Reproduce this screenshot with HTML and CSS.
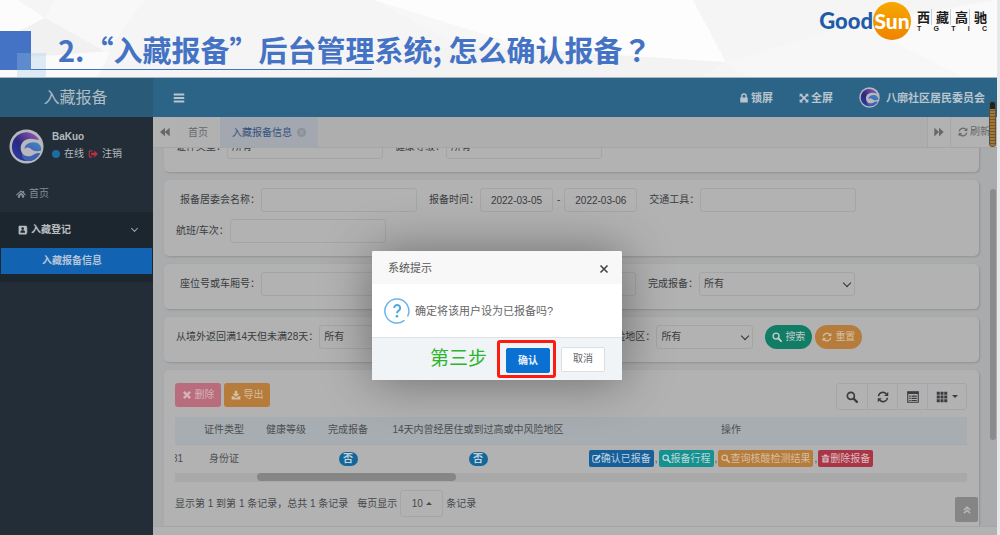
FILE: index.html
```html
<!DOCTYPE html>
<html lang="zh-CN">
<head>
<meta charset="utf-8">
<title>入藏报备后台管理系统</title>
<link rel="stylesheet" href="styles.css">
</head>
<body>
<svg class="sprite" aria-hidden="true">
  <defs>
    <linearGradient id="ring" x1="0" y1="1" x2="1" y2="0"><stop offset="0" stop-color="#2b3fa8"/><stop offset=".45" stop-color="#2a2a80"/><stop offset="1" stop-color="#a05cb8"/></linearGradient>
    <linearGradient id="wave" x1="0" y1="1" x2="1" y2="0"><stop offset="0" stop-color="#5a4fc0"/><stop offset="1" stop-color="#2f93b8"/></linearGradient>
  </defs>
  <symbol id="bars" viewBox="0 0 16 16"><path d="M1 2h14v2.6H1zM1 6.7h14v2.6H1zM1 11.4h14V14H1z"/></symbol>
  <symbol id="lock" viewBox="0 0 16 16"><path fill-rule="evenodd" d="M2 7h1.500V5a4.500 4.500 0 0 1 9 0v2H14v8H2zM5.700 7h4.600V5a2.300 2.300 0 0 0-4.600 0z"/></symbol>
  <symbol id="expand" viewBox="0 0 16 16"><path d="M1 1h5.500L4.800 2.800 8 6l3.200-3.200L9.500 1H15v5.500l-1.800-1.700L10 8l3.200 3.200L15 9.500V15H9.500l1.700-1.800L8 10l-3.200 3.200L6.500 15H1V9.500l1.800 1.700L6 8 2.800 4.800 1 6.500z"/></symbol>
  <symbol id="back" viewBox="0 0 16 16"><path d="M8 1v14L0 8zM15.500 1v14L7.500 8z"/></symbol>
  <symbol id="forward" viewBox="0 0 16 16"><path d="M.500 1l7.500 7-7.500 7zM8 1l7.500 7L8 15z"/></symbol>
  <symbol id="refresh" viewBox="0 0 16 16"><path d="M2 7a6 6 0 0 1 10.500-3M14 9a6 6 0 0 1-10.500 3" fill="none" stroke="currentColor" stroke-width="2"/><path d="M15 1v5.500H9.500zM1 15V9.500h5.500z"/></symbol>
  <symbol id="home" viewBox="0 0 16 16"><path d="M8 2l2.800 2.400V3H13v3.300L16 9l-1 1.200-7-6-7 6L0 9zM8 5.500l5 4.300V14H9.500v-3.500h-3V14H3V9.800z"/></symbol>
  <symbol id="logout" viewBox="0 0 16 16"><path d="M7 3H3.500Q2 3 2 4.500v7Q2 13 3.500 13H7" fill="none" stroke="currentColor" stroke-width="1.800"/><path d="M5 6h5V2.500L16 8l-6 5.500V10H5z"/></symbol>
  <symbol id="book" viewBox="0 0 16 16"><path fill-rule="evenodd" d="M2 1h11q1 0 1 1v2h1v2h-1v1h1v2h-1v1h1v2h-1v2q0 1-1 1H2q-1 0-1-1V2q0-1 1-1zM7.500 3.500a2.200 2.200 0 1 0 0 4.400 2.200 2.200 0 0 0 0-4.400zM3.800 12.200h7.400c0-2.400-1-3.700-2.400-3.700H6.200c-1.400 0-2.400 1.300-2.400 3.700z"/></symbol>
  <symbol id="search" viewBox="0 0 16 16"><circle cx="6.500" cy="6.500" r="4.700" fill="none" stroke="currentColor" stroke-width="2.200"/><path d="M10 10l4.500 4.500" stroke="currentColor" stroke-width="3" stroke-linecap="round"/></symbol>
  <symbol id="times" viewBox="0 0 16 16"><path d="M3 3l10 10M13 3L3 13" stroke="currentColor" stroke-width="4"/></symbol>
  <symbol id="download" viewBox="0 0 16 16"><path d="M6 1h4v5h3.500L8 11 2.500 6H6zM1 10h3l4 3 4-3h3v5H1z"/></symbol>
  <symbol id="list" viewBox="0 0 16 16"><path d="M1 1h14v14H1z" fill="none" stroke="currentColor" stroke-width="1.500"/><path d="M1 1h14v3H1zM3 6h2v1.500H3zM6 6h7v1.500H6zM3 9h2v1.500H3zM6 9h7v1.500H6zM3 12h2v1.300H3zM6 12h7v1.300H6z"/></symbol>
  <symbol id="grid" viewBox="0 0 16 16"><path d="M1 1h4v4H1zM6 1h4v4H6zM11 1h4v4h-4zM1 6h4v4H1zM6 6h4v4H6zM11 6h4v4h-4zM1 11h4v4H1zM6 11h4v4H6zM11 11h4v4h-4z"/></symbol>
  <symbol id="edit" viewBox="0 0 16 16"><path d="M10 2.500H3.500Q1.500 2.500 1.500 4.500v8q0 2 2 2h8q2 0 2-2V10" fill="none" stroke="currentColor" stroke-width="1.800"/><path d="M5.500 8.500L13 1l3 3-7.500 7.500h-3z"/></symbol>
  <symbol id="trash" viewBox="0 0 16 16"><path fill-rule="evenodd" d="M1 3h4l1-2h4l1 2h4v2H1zM2.500 6h11v9h-11zM5 7.500v6h1v-6zM7.500 7.500v6h1v-6zM10 7.500v6h1v-6z"/></symbol>
  <symbol id="up" viewBox="0 0 16 16"><path d="M3 8l5-4.500L13 8M3 13l5-4.500L13 13" fill="none" stroke="currentColor" stroke-width="2.600"/></symbol>
  <symbol id="brand" viewBox="0 0 36 36"><circle cx="18" cy="18" r="17.500" fill="#b8b8bc"/><path d="M31 11C27 5 21 3 16 3.500 8 4.500 3 11 3 18.500 3 27 10 33 18 33c4 0 7-1 9-2.500-8 1-15-4-15-11 0-6 5-10 11-9.500 3 .3 5.500 1.300 8 1z" fill="url(#ring)"/><path d="M33 22c1-5-3-8.500-8-8.500-5.500 0-9 3-9 7 1.500-1.500 4-2 6-.5 2.500 2 6 4 11 2z" fill="url(#wave)"/><path d="M13 25c3 3.500 8 4 12 1.500 2.500-1.500 5-2 7-1.500-2 5-7 8-12 8-4 0-7-3-7-8z" fill="#3d62b4"/></symbol>
</svg>

<header class="slide-head">
  <svg class="facets" viewBox="0 0 1000 78" preserveAspectRatio="none" aria-hidden="true">
    <path fill="#f5f5f5" d="M0 0h1000v78H0z"/>
    <path fill="#fcfcfc" d="M0 0h18l27 18L0 42z"/><path fill="#fbfbfb" d="M45 18l65 36-12 24H0V42z"/>
    <path fill="#f1f1f1" d="M45 18l62 34L0 60V42z"/><path fill="#f8f8f8" d="M55 0h90l-38 53L45 18z"/>
    <path fill="#f7f7f7" d="M375 0h320l33 63-270-18z"/><path fill="#fdfdfd" d="M375 0l320 0 33 63-190-12z"/>
    <path fill="#f3f3f3" d="M458 45l270 18-25 15H330z"/><path fill="#f7f7f7" d="M728 63L860 24l106 54H750z"/>
    <path fill="#fafafa" d="M860 24L1000 0v78h-34z"/>
  </svg>
  <span class="square"></span><span class="square-soft"></span><span class="rule"></span>
  <h1 class="slide-title">2.“入藏报备”后台管理系统; 怎么确认报备<span class="mid-mark" lang="zh-TW">？</span></h1>
  <div class="logo">
    <span class="good">Good</span><span class="sun">Sun</span>
    <div class="company">
      <div class="company-cn"><span>西</span><span>藏</span><span>高</span><span>驰</span></div>
      <div class="company-en"><span>T</span><span>G</span><span>T</span><span>I</span><span>C</span></div>
    </div>
  </div>
</header>

<div class="app">
  <aside class="sidebar">
    <div class="app-name">入藏报备</div>
    <div class="user">
      <svg class="avatar"><use href="#brand"/></svg>
      <div class="user-info">
        <strong>BaKuo</strong>
        <div class="status"><i class="dot"></i><a href="#">在线</a><svg class="icon red"><use href="#logout"/></svg><a href="#">注销</a></div>
      </div>
    </div>
    <nav>
      <a class="nav-home" href="#"><svg class="icon"><use href="#home"/></svg>首页</a>
      <div class="nav-group">
        <a class="nav-parent" href="#"><svg class="icon"><use href="#book"/></svg>入藏登记<i class="chevron"></i></a>
        <a class="nav-active" href="#">入藏报备信息</a>
      </div>
    </nav>
  </aside>

  <div class="main">
    <div class="topbar">
      <button class="plain menu" aria-label="菜单"><svg class="icon large"><use href="#bars"/></svg></button>
      <a class="top-link" href="#"><svg class="icon"><use href="#lock"/></svg>锁屏</a>
      <a class="top-link" href="#"><svg class="icon"><use href="#expand"/></svg>全屏</a>
      <a class="top-link org" href="#"><svg class="badge-logo"><use href="#brand"/></svg>八廓社区居民委员会</a>
    </div>
    <div class="tabs">
      <button class="plain tab-step" aria-label="向左"><svg class="icon"><use href="#back"/></svg></button>
      <a class="tab" href="#">首页</a>
      <a class="tab tab-on" href="#">入藏报备信息<i class="close-dot">×</i></a>
      <button class="plain tab-step tab-right" aria-label="向右"><svg class="icon"><use href="#forward"/></svg></button>
      <button class="plain tab-refresh"><svg class="icon"><use href="#refresh"/></svg>刷新</button>
    </div>

    <div class="content">
      <form class="stack">
        <section class="card row">
          <label class="field"><span>证件类型：</span><select class="box"><option>所有</option></select></label>
          <label class="field"><span>健康等级：</span><select class="box"><option>所有</option></select></label>
        </section>
        <section class="card">
          <div class="row inset">
            <label class="field"><span>报备居委会名称：</span><input class="box" type="text"></label>
            <div class="field"><label for="from">报备时间：</label><input id="from" class="box date" type="text" value="2022-03-05"><span class="dash">-</span><input class="box date" type="text" value="2022-03-06" aria-label="结束时间"></div>
            <label class="field"><span>交通工具：</span><input class="box" type="text"></label>
          </div>
          <div class="row"><label class="field"><span>航班/车次：</span><input class="box" type="text"></label></div>
        </section>
        <section class="card">
          <div class="row inset">
            <label class="field"><span>座位号或车厢号：</span><input class="box" type="text"></label>
            <div class="field"><input class="box wide" type="text" aria-label="座位"></div>
            <label class="field select"><span>完成报备：</span><select class="box"><option>所有</option></select></label>
          </div>
        </section>
        <section class="card row">
          <label class="field"><span>从境外返回满14天但未满28天：</span><select class="box medium"><option>所有</option></select></label>
          <label class="field select"><span>14天内曾经居住或到过高或中风险地区：</span><select class="box short"><option>所有</option></select></label>
          <div class="buttons">
            <button type="button" class="btn pill green"><svg class="icon"><use href="#search"/></svg>搜索</button>
            <button type="button" class="btn pill orange"><svg class="icon"><use href="#refresh"/></svg>重置</button>
          </div>
        </section>
        <section class="card table-card">
          <div class="toolbar">
            <div class="buttons">
              <button type="button" class="btn pink"><svg class="icon"><use href="#times"/></svg>删除</button>
              <button type="button" class="btn orange"><svg class="icon"><use href="#download"/></svg>导出</button>
            </div>
            <div class="tools">
              <button type="button" aria-label="搜索"><svg class="icon large"><use href="#search"/></svg></button>
              <button type="button" aria-label="刷新"><svg class="icon large"><use href="#refresh"/></svg></button>
              <button type="button" aria-label="切换"><svg class="icon large"><use href="#list"/></svg></button>
              <button type="button" aria-label="列"><svg class="icon large"><use href="#grid"/></svg><i class="caret"></i></button>
            </div>
          </div>
          <table>
            <colgroup><col class="c-id"><col class="c-std"><col class="c-std"><col class="c-std"><col class="c-risk"><col></colgroup>
            <thead><tr><th></th><th>证件类型</th><th>健康等级</th><th>完成报备</th><th>14天内曾经居住或到过高或中风险地区</th><th class="ops">操作</th></tr></thead>
            <tbody><tr><td class="id">31</td><td>身份证</td><td></td><td><span class="no">否</span></td><td><span class="no">否</span></td>
              <td class="ops"><div class="actions">
                <a class="act blue" href="#"><svg class="icon"><use href="#edit"/></svg>确认已报备</a><span>,</span>
                <a class="act teal" href="#"><svg class="icon"><use href="#search"/></svg>报备行程</a><span>,</span>
                <a class="act orange" href="#"><svg class="icon"><use href="#search"/></svg>查询核酸检测结果</a><span>,</span>
                <a class="act crimson" href="#"><svg class="icon"><use href="#trash"/></svg>删除报备</a>
              </div></td></tr></tbody>
          </table>
          <div class="h-track"><div class="h-thumb"></div></div>
          <div class="pager"><span>显示第 1 到第 1 条记录，总共 1 条记录</span><span class="per">每页显示</span><button type="button" class="page-size">10<i class="caret caret-up"></i></button><span>条记录</span></div>
        </section>
      </form>
      <button class="to-top" aria-label="返回顶部"><svg class="icon"><use href="#up"/></svg></button>
      <div class="v-thumb"></div>
    </div>
    <footer class="foot"></footer>
  </div>

  <div class="grip"></div>
  <div class="overlay">
    <div class="dialog" role="dialog" aria-labelledby="dialog-title">
      <div class="dialog-head"><span id="dialog-title">系统提示</span><button class="plain close" aria-label="关闭"><svg viewBox="0 0 10 10"><path d="M1.500 1.500l7 7M8.500 1.500l-7 7" stroke="currentColor" stroke-width="1.600"/></svg></button></div>
      <div class="dialog-body">
        <svg class="question" viewBox="0 0 26 26"><path d="M23.800 18A12 12 0 1 0 20 22.700" fill="none" stroke="#6cb4e6" stroke-width="1.500" stroke-linecap="round"/><path d="M10.200 10a3 3 0 1 1 4.500 2.600c-1.200.700-1.700 1.200-1.700 2.700" fill="none" stroke="#4ba3df" stroke-width="1.900"/><circle cx="13" cy="18.300" r="1.300" fill="#4ba3df"/></svg>
        确定将该用户设为已报备吗?
      </div>
      <div class="dialog-foot"><span class="step">第三步</span><span class="mark"><button class="choice primary">确认</button></span><button class="choice">取消</button></div>
    </div>
  </div>
</div>
</body>
</html>
```

FILE: styles.css
```css
* { box-sizing: border-box; }
body {
  margin: 0;
  height: 100vh;
  display: flex;
  flex-direction: column;
  overflow: hidden;
  background: #e7e8ec;
  color: #393c40;
  font: 10px/14px "Liberation Sans", "Noto Sans CJK SC", sans-serif;
}
a { color: inherit; text-decoration: none; }
i { font-style: normal; }
button, input, select { font: inherit; color: inherit; margin: 0; }
.sprite { position: absolute; width: 0; height: 0; }
.icon { width: 10px; height: 10px; fill: currentColor; flex: none; }
.icon.large { width: 12px; height: 12px; }
.plain { border: 0; background: none; padding: 0; display: flex; align-items: center; justify-content: center; }

.slide-head {
  position: relative;
  flex: none;
  height: 78px;
  margin-right: 3px;
  padding: 0 10px 0 58px;
  display: flex;
  justify-content: space-between;
  border-bottom: 1px solid #a9b5c0;
}
.facets { position: absolute; inset: 0; width: 100%; height: 100%; }
.square { position: absolute; left: 0; top: 31px; width: 31px; height: 39px; background: #4472c4; }
.square-soft { position: absolute; left: 17px; top: 53px; width: 29px; height: 25px; background: rgba(157, 195, 230, .3); }
.rule { position: absolute; left: 31px; top: 69px; width: 341px; height: 1px; background: #4472c4; }
.slide-title {
  position: relative;
  margin: 31px 0 0;
  color: #4472c4;
  font: bold 29px/36px "Noto Sans CJK SC", sans-serif;
  white-space: nowrap;
}
.mid-mark { font-family: "Noto Sans CJK TC", sans-serif; }
.logo { position: relative; display: flex; height: 42px; align-items: center; }
.good { color: #1f5ba6; font: 900 22px/38px Lato, sans-serif; }
.sun {
  width: 38px;
  height: 38px;
  border-radius: 50%;
  background: linear-gradient(#f6a800, #f08300);
  color: #fff;
  font: 900 21px/38px Lato, sans-serif;
  text-align: center;
}
.company { width: 70px; margin-left: 6px; color: #1c1c1c; }
.company-cn, .company-en { display: flex; justify-content: space-between; }
.company-cn { font: bold 13px/16px "Noto Sans CJK SC", sans-serif; }
.company-cn span + span { border-left: 1px solid #ccc; padding-left: 4px; }
.company-en { font: bold 7px/8px "Liberation Sans", sans-serif; }

.app { position: relative; flex: 1; min-height: 0; display: flex; margin-right: 3px; }
.sidebar { width: 153px; flex: none; background: #222d38; color: #a9adb0; }
.app-name { height: 39px; background: #295a78; color: #b1bbc2; font-size: 16px; line-height: 39px; text-align: center; padding-right: 2px; }
.user { display: flex; gap: 8px; padding: 12px 9px; height: 59px; }
.avatar { width: 35px; height: 35px; }
.user-info { padding-top: 1px; color: #b6babd; }
.status { display: flex; align-items: center; gap: 4px; margin-top: 3px; }
.dot { width: 8px; height: 8px; border-radius: 50%; background: #1c6c9f; }
.red { color: #b9313f; }
.nav-home, .nav-parent { display: flex; align-items: center; height: 36px; gap: 3px; }
.nav-home { padding-left: 16px; color: #838c95; }
.nav-group { background: #1c262f; padding-bottom: 8px; }
.nav-parent { padding: 0 16px 0 18px; color: #b9bcbe; font-weight: bold; }
.chevron { width: 5px; height: 5px; margin: 0 0 3px auto; border: solid #a2a6a9; border-width: 0 1px 1px 0; transform: rotate(45deg); }
.nav-active { display: block; margin: 0 1px; padding: 6px 0 6px 41px; background: #1264b3; color: #b5c5d8; font-weight: bold; }

.main { flex: 1; min-width: 0; display: flex; flex-direction: column; background: #aaabac; }
.topbar { height: 39px; flex: none; display: flex; align-items: center; gap: 26px; padding: 0 12px 0 20px; background: #2b6486; color: #b8c5ce; }
.menu { margin-right: auto; }
.top-link { display: flex; align-items: center; gap: 2px; font-size: 11px; font-weight: bold; }
.org { gap: 6px; }
.badge-logo { width: 21px; height: 21px; }
.tabs { height: 31px; flex: none; display: flex; background: #aeaeae; border-bottom: 1px solid #a6a6a6; color: #66686b; overflow: hidden; }
.tab-step { width: 23px; background: #b2b2b2; }
.tab { padding: 9px 12px 0; background: #b1b1b1; }
.tab-on { display: flex; gap: 5px; padding-right: 12px; background: #a3a7af; color: #34507b; }
.close-dot { width: 9px; height: 9px; margin-top: 2px; border-radius: 50%; background: #8d9197; color: #a3a7af; line-height: 9px; text-align: center; }
.tab-right { margin-left: auto; border-left: 1px solid #a6a6a6; }
.tab-refresh { width: 47px; gap: 2px; justify-content: flex-start; padding-left: 7px; border-left: 1px solid #a6a6a6; white-space: nowrap; background: #b2b2b2; }

.content { position: relative; flex: 1; min-height: 0; overflow: hidden; padding: 0 18px 0 11px; }
.stack { display: flex; flex-direction: column; gap: 8px; margin-top: -21px; }
.card { padding: 8px 12px 13px; border-radius: 5px; background: #b2b2b2; box-shadow: 1px 1px 2px #929292; flex: none; }
.row { display: flex; gap: 12px; }
.row + .row { margin-top: 7px; }
.inset { padding-left: 4px; }
.field { display: flex; align-items: center; gap: 1px; white-space: nowrap; position: relative; }
.box { width: 156px; height: 24px; padding: 0 4px; border: 1px solid #a4a5a6; border-radius: 3px; background: transparent; outline: 0; appearance: none; }
.date { width: 73px; padding: 0; text-align: center; }
.dash { padding: 0 3px; }
.wide { width: 207px; }
.medium { width: 143px; }
.short { width: 97px; }
.select::after { content: ""; position: absolute; right: 5px; top: 8px; width: 5px; height: 5px; border: solid #333; border-width: 0 1px 1px 0; transform: rotate(45deg); }
.buttons { display: flex; gap: 3px; }
.btn { display: flex; align-items: center; justify-content: center; gap: 3px; width: 46px; height: 24px; padding: 0; border: 0; border-radius: 3px; color: #c4cbc9; }
.pill { width: 47px; border-radius: 12px; }
.green { background: #127d66; }
.orange { background: #b57c3b; color: #d5bea2; }
.pink { background: #b96c7b; color: #d5b1b8; }

.table-card { padding: 13px 12px 0 11px; height: 180px; }
.toolbar { display: flex; justify-content: space-between; margin-bottom: 7px; }
.tools { display: flex; border: 1px solid #a5a6a7; border-radius: 3px; }
.tools button { display: flex; align-items: center; justify-content: center; gap: 4px; width: 30px; height: 25px; padding: 0; border: 0; background: none; }
.tools button + button { border-left: 1px solid #a5a6a7; }
.tools button:last-child { width: 39px; }
.caret { border: 3px solid transparent; border-top-color: currentColor; border-bottom: 0; }
.caret-up { border-top: 0; border-bottom: 3px solid currentColor; }
table { width: 100%; table-layout: fixed; border-collapse: collapse; text-align: center; color: #4c4f52; }
th, td { padding: 0; font-weight: normal; white-space: nowrap; }
th { height: 27px; background: #a7adb1; }
td { height: 29px; border-top: 1px solid #a7a8a9; }
.c-id { width: 18px; }
.c-std { width: 62px; }
.c-risk { width: 198px; }
.id { overflow: hidden; text-align: left; text-indent: -3px; }
.ops { padding-right: 82px; }
.no { display: inline-block; width: 19px; border-radius: 7px; background: #146799; color: #c4d2dc; font-weight: bold; }
.actions { display: flex; justify-content: center; align-items: center; gap: 1px; }
.act { display: flex; align-items: center; height: 17px; padding: 0 3px; border-radius: 2px; }
.act .icon { width: 9px; height: 9px; }
.blue { background: #15609a; color: #c1d0dd; }
.teal { background: #159190; color: #bcd7d7; }
.crimson { background: #a93646; color: #dabdc1; }
.h-track { height: 9px; padding-left: 82px; background: #a9a9a9; }
.h-thumb { width: 199px; height: 8px; border-radius: 4px; background: #868686; }
.pager { display: flex; align-items: center; gap: 3px; margin-top: 8px; color: #46494c; white-space: nowrap; }
.per { margin-left: 6px; }
.page-size { display: flex; align-items: center; justify-content: center; gap: 3px; width: 43px; height: 27px; border: 1px solid #a5a6a7; border-radius: 3px; background: none; }
.to-top { position: absolute; right: 19px; bottom: 4px; width: 23px; height: 25px; display: flex; align-items: center; justify-content: center; padding: 0; border: 0; border-radius: 2px; background: #858585; color: #b5b5b5; }
.v-thumb { position: absolute; right: 1px; top: 41px; width: 6px; height: 251px; border-radius: 3px; background: #8b8b8b; }
.foot { height: 9px; flex: none; background: #b2b2b2; border-top: 1px solid #a6a6a6; }
.grip { position: absolute; right: 1px; top: 23px; width: 7px; height: 46px; border-radius: 3px; border: 1px solid #54504a; background: linear-gradient(#17252e 7px, transparent 7px), repeating-linear-gradient(#a9772c 0 2px, #6d5633 2px 3px); }

.overlay { position: absolute; inset: 0; display: flex; justify-content: center; align-items: flex-start; padding: 173px 3px 0 0; }
.dialog { width: 250px; border-radius: 2px; background: #fff; box-shadow: 1px 1px 50px rgba(0, 0, 0, .4); font-size: 11px; color: #666; }
.dialog-head { display: flex; justify-content: space-between; align-items: center; height: 33px; padding: 0 13px 0 16px; border-radius: 2px 2px 0 0; background: #f8f8f8; color: #555; }
.close { padding-top: 3px; color: #444; }
.close svg { width: 10px; height: 10px; }
.dialog-body { display: flex; align-items: center; gap: 5px; height: 53px; padding-left: 12px; }
.question { width: 26px; height: 26px; }
.dialog-foot { display: flex; align-items: center; justify-content: flex-end; height: 43px; padding-right: 17px; border-top: 1px solid #e0e3e6; background: #f0f4f7; }
.step { margin-right: 10px; color: #2db52d; font-size: 19px; line-height: 26px; }
.mark { margin-right: 5px; padding: 5px 3px 2px 6px; border: 3px solid #fb1b12; border-radius: 3px; }
.choice { display: block; width: 44px; height: 25px; padding: 0; border: 1px solid #dcdfe2; border-radius: 2px; background: #fff; color: #62656b; font-size: 10px; }
.primary { border-color: #0a70d2; background: #0a70d2; color: #e8f2fc; font-weight: bold; }
```
